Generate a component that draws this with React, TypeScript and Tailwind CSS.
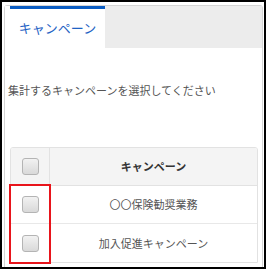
const rows = ["〇〇保険勧奨業務", "加入促進キャンペーン"];

function Check() {
  return (
    <span className="block w-[17px] h-[17px] rounded-[3px] border border-[#b4b4b4] bg-gradient-to-b from-[#f2f2f2] to-[#d9d9d9]" />
  );
}

export default function App() {
  return (
    <div
      className="relative w-[266px] h-[269px] overflow-hidden border-2 border-black bg-white pt-[3px] pl-[2px] pr-[1px]"
      style={{ fontFamily: '"Noto Sans CJK JP", "Noto Sans", sans-serif' }}
    >
      <div className="h-[300px] rounded-t-[3px] border border-[#d4d4d4]">
        {/* tab bar */}
        <div className="flex h-[42px]">
          <div className="w-[5px] bg-white" />
          <div className="w-[95px] border-t-[3px] border-[#0a5cc2] bg-white flex items-center justify-center pb-[2px]">
            <span className="text-[13px] text-[#1f63c4]">キャンペーン</span>
          </div>
          <div className="flex-1 bg-[#ececec]" />
        </div>

        <p className="mt-[34px] pl-[3px] text-[11px] leading-[16px] text-[#555]">
          集計するキャンペーンを選択してください
        </p>

        <div className="mt-[49px] ml-[5px] mr-[4px] rounded-t-[3px] border border-[#e2e2e2] overflow-hidden">
          <div className="flex h-[38px] bg-[#f4f4f4] border-b border-[#e2e2e2]">
            <div className="w-[39px] flex items-center justify-center border-r border-[#e2e2e2]">
              <Check />
            </div>
            <div className="flex-1 flex items-center justify-center text-[11px] font-bold text-[#333]">
              キャンペーン
            </div>
          </div>
          {rows.map((r, i) => (
            <div
              key={r}
              className={`flex h-[38px] bg-white ${i === 0 ? "border-b border-[#e8e8e8]" : ""}`}
            >
              <div className="w-[39px] flex items-center justify-center border-r border-[#e8e8e8]">
                <Check />
              </div>
              <div className="flex-1 flex items-center justify-center text-[11px] text-[#555]">
                {r}
              </div>
            </div>
          ))}
        </div>
      </div>

      {/* annotation */}
      <div className="absolute left-[7px] top-[182px] w-[42px] h-[80px] border-2 border-[#e8141b]" />
    </div>
  );
}
